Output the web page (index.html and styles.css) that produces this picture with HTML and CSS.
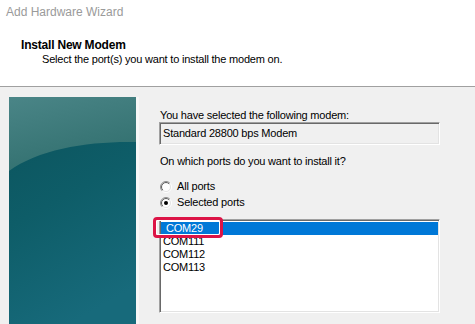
FILE: index.html
```html
<!DOCTYPE html>
<html>
<head>
<meta charset="utf-8">
<link rel="stylesheet" href="styles.css">
</head>
<body>
<div class="header">
  <div class="wintitle">Add Hardware Wizard</div>
  <div class="heading">Install New Modem</div>
  <div class="subheading">Select the port(s) you want to install the modem on.</div>
</div>
<div class="main">
  <div class="banner">
    <svg class="banner-art" width="127" height="240" viewBox="0 0 127 240" preserveAspectRatio="none">
      <defs>
        <linearGradient id="lower" x1="0" y1="0" x2="0.3" y2="1">
          <stop offset="0" stop-color="#0b525b"/>
          <stop offset="0.5" stop-color="#0e5d68"/>
          <stop offset="1" stop-color="#176a7b"/>
        </linearGradient>
        <linearGradient id="upper" x1="0" y1="0" x2="0.4" y2="1">
          <stop offset="0" stop-color="#4a8587"/>
          <stop offset="1" stop-color="#32706f"/>
        </linearGradient>
      </defs>
      <rect x="0" y="0" width="127" height="240" fill="url(#lower)"/>
      <path d="M0 0 H127 V45 C80 44 30 52 0 74 Z" fill="url(#upper)"/>
    </svg>
  </div>
  <div class="content">
    <div class="label first">You have selected the following modem:</div>
    <div class="textbox">Standard 28800 bps Modem</div>
    <div class="label second">On which ports do you want to install it?</div>
    <div class="radios">
      <div class="radio">
        <svg class="radio-icon" width="12" height="12" viewBox="0 0 12 12">
          <defs>
            <linearGradient id="rs1" x1="0" y1="0" x2="1" y2="1">
              <stop offset="0.45" stop-color="#8d8d8d"/>
              <stop offset="0.55" stop-color="#ffffff"/>
            </linearGradient>
            <linearGradient id="rs2" x1="0" y1="0" x2="1" y2="1">
              <stop offset="0.45" stop-color="#5a5a5a"/>
              <stop offset="0.55" stop-color="#e3e3e3"/>
            </linearGradient>
          </defs>
          <circle cx="6" cy="6" r="5.5" fill="none" stroke="url(#rs1)"/>
          <circle cx="6" cy="6" r="4.5" fill="#fff" stroke="url(#rs2)"/>
        </svg>
        <span>All ports</span>
      </div>
      <div class="radio">
        <svg class="radio-icon" width="12" height="12" viewBox="0 0 12 12">
          <circle cx="6" cy="6" r="5.5" fill="none" stroke="url(#rs1)"/>
          <circle cx="6" cy="6" r="4.5" fill="#fff" stroke="url(#rs2)"/>
          <circle cx="6" cy="6" r="2" fill="#000"/>
        </svg>
        <span>Selected ports</span>
      </div>
    </div>
    <div class="listwrap">
      <div class="listbox">
        <div class="item selected">COM29</div>
        <div class="item">COM111</div>
        <div class="item">COM112</div>
        <div class="item">COM113</div>
      </div>
      <div class="callout"></div>
    </div>
  </div>
</div>
</body>
</html>
```
FILE: styles.css
```css
html, body {
  margin: 0;
  padding: 0;
}
body {
  width: 475px;
  height: 324px;
  overflow: hidden;
  background: #f0f0f0;
  font-family: "Liberation Sans", Arial, sans-serif;
  font-size: 11px;
  letter-spacing: -0.2px;
  color: #000;
}
.header {
  background: #fff;
  border-bottom: 1px solid #a0a0a0;
  box-sizing: border-box;
  height: 87px;
}
.wintitle {
  font-size: 12px;
  line-height: 15px;
  letter-spacing: 0;
  color: #9a9a9a;
  padding: 5px 0 0 6px;
}
.heading {
  font-weight: bold;
  font-size: 12px;
  line-height: 14px;
  padding: 18px 0 0 21px;
}
.subheading {
  font-size: 11px;
  line-height: 13px;
  padding: 1px 0 0 42px;
}
.main {
  display: flex;
  padding: 10px 0 0 9px;
}
.banner {
  width: 127px;
  height: 240px;
  border-right: 3px solid #f7f7f7;
  flex: none;
}
.banner-art {
  display: block;
}
.content {
  margin-left: 20px;
  width: 281px;
  flex: none;
}
.label {
  line-height: 13px;
  padding-left: 1px;
}
.label.first {
  margin-top: 12px;
}
.textbox {
  margin-top: 0;
  height: 23px;
  box-sizing: border-box;
  border: 1px solid;
  border-color: #a0a0a0 #fff #fff #a0a0a0;
  box-shadow: inset 1px 1px 0 #696969, inset -1px -1px 0 #e3e3e3;
  background: #f0f0f0;
  padding: 4px 0 0 3px;
  line-height: 13px;
}
.label.second {
  margin-top: 10px;
}
.radios {
  margin-top: 12px;
  display: flex;
  flex-direction: column;
  gap: 3px;
}
.radio {
  display: flex;
  align-items: center;
  height: 13px;
  padding-left: 1px;
}
.radio-icon {
  display: block;
  flex: none;
}
.radio span {
  margin-left: 5px;
  line-height: 13px;
}
.listwrap {
  position: relative;
  margin-top: 10px;
}
.listbox {
  height: 94px;
  box-sizing: border-box;
  border: 1px solid;
  border-color: #a0a0a0 #fff #fff #a0a0a0;
  box-shadow: inset 1px 1px 0 #696969, inset -1px -1px 0 #e3e3e3;
  background: #fff;
  padding: 2px 1px 1px 1px;
}
.item {
  height: 13px;
  line-height: 13px;
  padding-left: 2px;
  color: #000;
}
.item.selected {
  background: #0078d7;
  color: #fff;
  padding-left: 5px;
}
.callout {
  position: absolute;
  left: -6px;
  top: -2px;
  width: 70px;
  height: 21px;
  box-sizing: border-box;
  border: 3px solid #dc1446;
  border-radius: 4px;
  box-shadow: inset 1px 1px 0 #fff, inset -1px -1px 0 #fff;
}
```
